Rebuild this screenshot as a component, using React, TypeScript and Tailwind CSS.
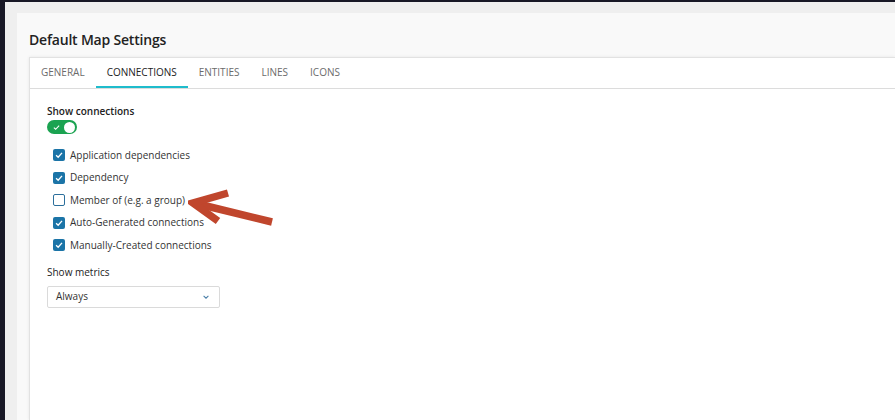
import React from "react";

const tabs = ["General", "Connections", "Entities", "Lines", "Icons"];

const options = [
  { label: "Application dependencies", checked: true },
  { label: "Dependency", checked: true },
  { label: "Member of (e.g. a group)", checked: false },
  { label: "Auto-Generated connections", checked: true },
  { label: "Manually-Created connections", checked: true },
];

function Checkbox({ checked }: { checked: boolean }) {
  if (!checked) {
    return (
      <span className="h-[12px] w-[12px] shrink-0 rounded-[2px] border border-[#2c6f9c] bg-white" />
    );
  }
  return (
    <span className="flex h-[12px] w-[12px] shrink-0 items-center justify-center rounded-[2px] bg-[#1b74a7]">
      <svg viewBox="0 0 12 12" className="h-[10px] w-[10px]">
        <path d="M2.5 6.2 L5 8.6 L9.6 3.4" fill="none" stroke="white" strokeWidth="1.6" />
      </svg>
    </span>
  );
}

export default function App() {
  return (
    <div
      className="flex h-[420px] w-[895px] overflow-hidden bg-[#181826] pl-[5px] pt-[2px]"
      style={{ fontFamily: '"Open Sans", "Noto Sans", sans-serif' }}
    >
      <div className="flex flex-1 bg-[#efefef] pl-[12px] pt-[11px]">
        <div className="flex flex-1 flex-col bg-[#f9f9f9] pl-[12px] pt-[17px]">
          <h1 className="mb-[7px] text-[14px] font-semibold leading-[20px] tracking-[-0.2px] text-[#222]">
            Default Map Settings
          </h1>

          {/* card */}
          <div className="relative flex-1 border-l border-t border-[#e2e2e2] bg-white shadow-[0_0_3px_rgba(0,0,0,0.08)]">
            <div className="flex border-b border-[#dcdcdc]">
              {tabs.map((tab) => {
                const active = tab === "Connections";
                return (
                  <div
                    key={tab}
                    className={`flex h-[30px] items-center border-b-[2px] px-[11px] text-[10px] uppercase ${
                      active
                        ? "border-[#1fbccc] text-[#222]"
                        : "border-transparent text-[#6b6b6b]"
                    }`}
                  >
                    {tab}
                  </div>
                );
              })}
            </div>

            <div className="flex flex-col pl-[17px] pt-[15px]">
              <p className="text-[10px] font-semibold leading-[14px] text-[#222]">
                Show connections
              </p>
              <div className="mt-[2px] flex h-[14px] w-[30px] items-center justify-between rounded-full bg-[#1ba351] pl-[6px] pr-[2px]">
                <svg viewBox="0 0 8 8" className="h-[7px] w-[7px]">
                  <path d="M1 4.2 L3 6 L7 1.8" fill="none" stroke="white" strokeWidth="1.2" />
                </svg>
                <span className="h-[11px] w-[11px] rounded-full bg-white" />
              </div>

              <ul className="mt-[10px] flex flex-col pl-[6px]">
                {options.map((opt) => (
                  <li key={opt.label} className="flex h-[22.5px] items-center gap-[5px]">
                    <Checkbox checked={opt.checked} />
                    <span className="text-[10px] text-[#333]">{opt.label}</span>
                  </li>
                ))}
              </ul>

              <p className="mt-[8px] text-[10px] font-medium leading-[14px] text-[#222]">
                Show metrics
              </p>
              <div className="mt-[7px] flex h-[22px] w-[173px] items-center justify-between rounded-[2px] border border-[#dadada] bg-white pl-[8px] pr-[9px]">
                <span className="text-[10px] text-[#333]">Always</span>
                <svg viewBox="0 0 10 10" className="h-[8px] w-[8px]">
                  <path d="M2 3.5 L5 6.5 L8 3.5" fill="none" stroke="#4a7fa8" strokeWidth="1.3" />
                </svg>
              </div>
            </div>

            {/* annotation arrow */}
            <svg
              className="pointer-events-none absolute left-[158px] top-[130px]"
              width="95"
              height="45"
              viewBox="0 0 95 45"
            >
              <path d="M6 15 L84 34" stroke="#c0462d" strokeWidth="7.5" />
              <path
                d="M40 5 L5 15 L30 33"
                fill="none"
                stroke="#c0462d"
                strokeWidth="7.5"
                strokeLinejoin="miter"
                strokeMiterlimit="6"
              />
            </svg>
          </div>
        </div>
      </div>
    </div>
  );
}
